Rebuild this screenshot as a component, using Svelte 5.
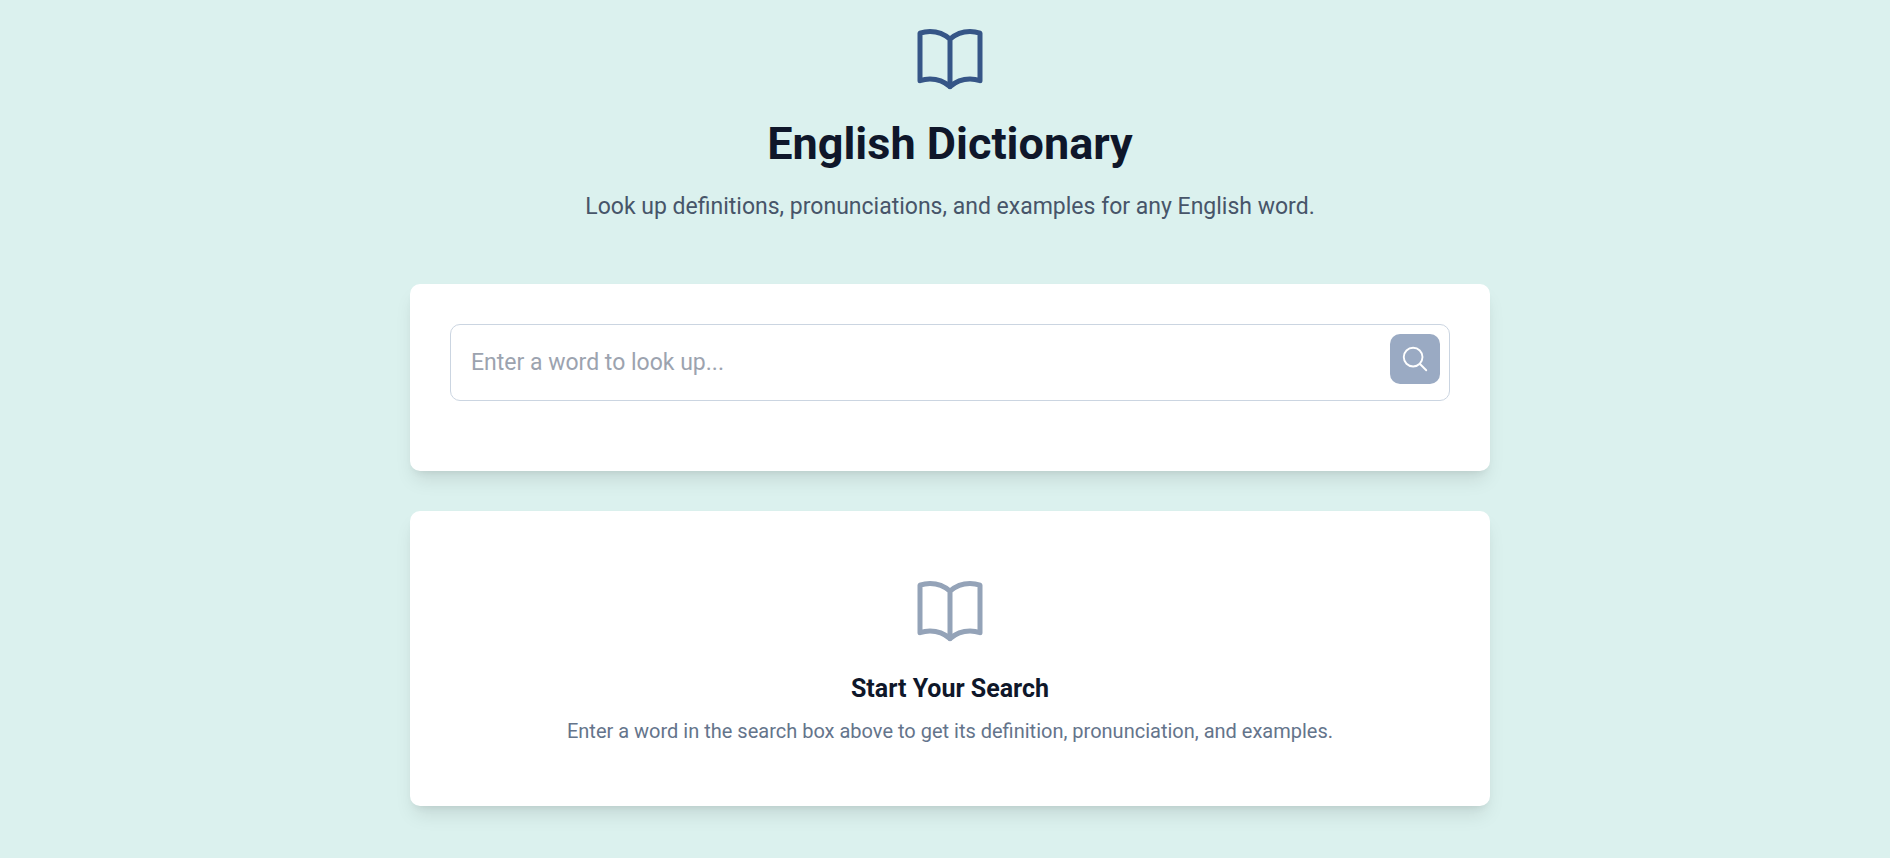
<script>
  let word = $state('');
</script>

{#snippet book()}
  <svg class="book" viewBox="0 0 24 24" fill="none" stroke="currentColor" stroke-width="1.5" stroke-linecap="round" stroke-linejoin="round" aria-hidden="true">
    <path d="M12 6.042A8.967 8.967 0 0 0 6 3.75c-1.052 0-2.062.18-3 .512v14.25A8.987 8.987 0 0 1 6 18c2.305 0 4.408.867 6 2.292m0-14.25a8.966 8.966 0 0 1 6-2.292c1.052 0 2.062.18 3 .512v14.25A8.987 8.987 0 0 0 18 18a8.967 8.967 0 0 0-6 2.292m0-14.25v14.25" />
  </svg>
{/snippet}

<div class="page">
  <div class="content">
    <header>
      {@render book()}
      <h1>English Dictionary</h1>
      <p class="lead">Look up definitions, pronunciations, and examples for any English word.</p>
    </header>

    <main>
      <section class="card search">
        <form onsubmit={(e) => e.preventDefault()}>
          <input type="text" aria-label="Word" placeholder="Enter a word to look up..." bind:value={word} />
          <button type="submit" aria-label="Search" class:ready={word.trim()}>
            <svg viewBox="0 0 24 24" fill="none" stroke="currentColor" stroke-width="1.5" stroke-linecap="round" stroke-linejoin="round" aria-hidden="true">
              <path d="m21 21-5.197-5.197m0 0A7.5 7.5 0 1 0 5.196 5.196a7.5 7.5 0 0 0 10.607 10.607Z" />
            </svg>
          </button>
        </form>
      </section>

      <section class="card empty">
        {@render book()}
        <h2>Start Your Search</h2>
        <p>Enter a word in the search box above to get its definition, pronunciation, and examples.</p>
      </section>
    </main>
  </div>
</div>

<style>
  :global(body) {
    margin: 0;
    background: #dbf1ee;
  }

  .page {
    padding: 19px 20px 40px 30px;
    font-family: Roboto, 'Liberation Sans', sans-serif;
    color: #0f172a;
  }

  .content {
    max-width: 1080px;
    margin: 0 auto;
  }

  header,
  .empty {
    display: flex;
    flex-direction: column;
    align-items: center;
    text-align: center;
  }

  header {
    gap: 20px;
    color: #365687;
    margin-bottom: 60px;
  }

  h1,
  h2,
  p {
    margin: 0;
  }

  .book {
    display: block;
    width: 80px;
    height: 80px;
  }

  h1 {
    color: #0f172a;
    font-size: 45px;
    line-height: 50px;
    font-weight: 700;
  }

  .lead {
    color: #475569;
    font-size: 23px;
    line-height: 35px;
  }

  main {
    display: flex;
    flex-direction: column;
    gap: 40px;
  }

  .card {
    background: #fff;
    border-radius: 10px;
    box-shadow:
      0 12px 19px -4px rgb(0 0 0 / 0.1),
      0 5px 8px -5px rgb(0 0 0 / 0.1);
  }

  .search {
    padding: 40px 40px 70px;
  }

  form {
    position: relative;
  }

  input {
    box-sizing: border-box;
    display: block;
    width: 100%;
    padding: 20px 80px 20px 20px;
    border: 1px solid #cbd5e1;
    border-radius: 10px;
    background: #fff;
    color: #0f172a;
    font-family: inherit;
    font-size: 23px;
    line-height: 35px;
    height: 77px;
  }

  input::placeholder {
    color: #9ca3af;
    opacity: 1;
  }

  button {
    position: absolute;
    top: 10px;
    right: 10px;
    padding: 10px;
    border: 0;
    border-radius: 10px;
    background: #9aaac3;
    color: #fff;
    cursor: pointer;
  }

  button.ready {
    background: #365687;
  }

  button svg {
    display: block;
    width: 30px;
    height: 30px;
  }

  .empty {
    padding: 60px 40px;
    color: #94a3b8;
  }

  h2 {
    margin: 20px 0 10px;
    color: #0f172a;
    font-size: 25px;
    line-height: 35px;
    font-weight: 700;
  }

  .empty p {
    color: #64748b;
    font-size: 20px;
    line-height: 30px;
  }
</style>
